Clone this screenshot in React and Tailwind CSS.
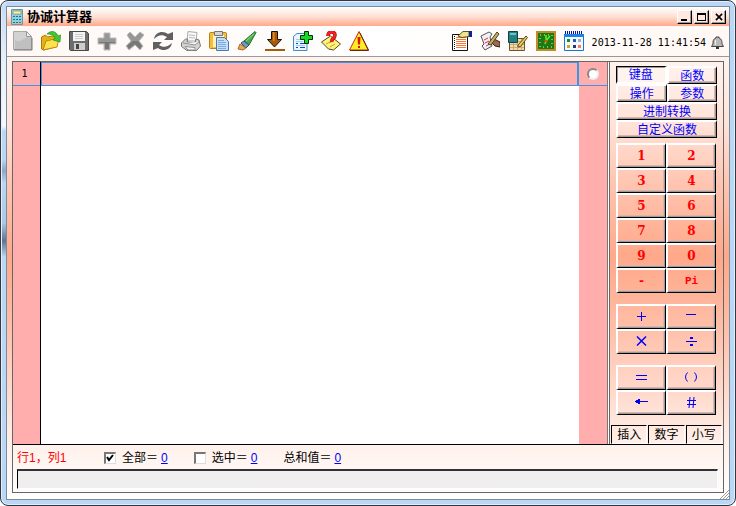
import { useState } from "react";

const raised =
  "border-t-2 border-l-2 border-r border-b border-t-white border-l-white border-r-black border-b-black shadow-[inset_-1px_-1px_0_#9a9a9a,inset_-2px_-2px_0_#d9b5ac]";
const pressed =
  "border-t border-l border-r-2 border-b-2 border-t-black border-l-black border-r-white border-b-white bg-[#fff3ee] shadow-[inset_1px_1px_0_#999]";

const leftTools = [
  {
    name: "新建",
    icon: (
      <>
        <path d="M.5.5h13l5 5v13H.5z" fill="#d2d2d2" stroke="#a8a8a8" />
        <path d="M2 9c4 3 9-1 12-3h4v12H2z" fill="#c0c0c0" />
        <path d="M13.5.5v5h5z" fill="#f0f0f0" stroke="#999" />
        <path d="M1 19h18V7" fill="none" stroke="#777" />
      </>
    ),
  },
  {
    name: "打开",
    icon: (
      <>
        <path d="M.5 6v12l2 1 12-3V6l-3-1-5 1-2-2z" fill="#e5b11b" stroke="#a97b08" />
        <path d="m2 19 3-9 13-3-2 9z" fill="#ffe04d" stroke="#b88a10" />
        <path d="M6 3c4-4 9-3 11 2l2.500-1-.5 7-7-2 2-2c-1-3-4-4-8-4z" fill="#3fc832" stroke="#258c20" strokeWidth=".7" />
      </>
    ),
  },
  {
    name: "保存",
    icon: (
      <>
        <path d="M.5.5h17l2 2v17h-18l-1-1z" fill="#6c6c6c" stroke="#484848" />
        <path d="M4 1h12v9H4z" fill="#f3f3f3" />
        <path d="M6 3.500h8M6 5.500h8M6 7.500h8" stroke="#ccc" />
        <path d="M5 12h11v7H5z" fill="#cecece" />
        <path d="M7 13h3v5H7z" fill="#444" />
      </>
    ),
  },
  {
    name: "添加",
    icon: (
      <>
        <path d="M7 2h6v5h6v6h-6v6H7v-6H1V7h6z" fill="#969696" stroke="#bbb" strokeLinejoin="round" />
        <path d="M8 11H2v1h6v6h4v-6h6v-1z" fill="#777" />
      </>
    ),
  },
  {
    name: "删除",
    icon: (
      <>
        <path d="m2 4 3-3 5 5 5-5 4 3-5 6 4 5-3 4-5-5-6 5-3-4 5-5z" fill="#969696" stroke="#bbb" strokeLinejoin="round" />
        <path d="m2 15 6-5h5l4 5-2 3-5-5-6 5z" fill="#777" />
      </>
    ),
  },
  {
    name: "刷新",
    icon: (
      <>
        <path d="M1 8C2 1 10-1 15 3l5-2v8h-9l3-3C9 3 5 4 1 8z" fill="#606060" />
        <path d="M19 12c-1 7-9 9-14 5l-5 2v-8h9l-3 3c4 3 9 2 13-2z" fill="#606060" />
      </>
    ),
  },
  {
    name: "打印",
    icon: (
      <>
        <path d="m6 10 1-9.500 9 1L15 10z" fill="#f8f8f8" stroke="#aaa" />
        <path d="m8 4 6 .5M8 6.500l6 .5" stroke="#bbb" />
        <path d="m.5 12 4-4h2L6 11l8 1 1-4 3 1 1.500 6-4 4.500H6l-5.500-4z" fill="#d3d3d3" stroke="#777" />
        <path d="m2 12 12 2 4-3M4 15.500l10 1V19H7z" fill="#f7f7f7" stroke="#909090" />
      </>
    ),
  },
  {
    name: "粘贴",
    icon: (
      <>
        <rect x=".5" y="1.500" width="17" height="16" rx="1" fill="#f3bd3d" stroke="#b78118" />
        <path d="M4 4h11v12H4z" fill="#fff1b8" />
        <path d="M5.500.5h8v4h-8z" fill="#d5d5d5" stroke="#777" />
        <path d="M7.500 6.500h8l4 4v9h-12z" fill="#c4ddf8" stroke="#4b79ae" />
        <path d="M9 9.500h6M9 11.500h8M9 13.500h8M9 15.500h8M9 17.500h8" stroke="#7dabe0" />
      </>
    ),
  },
  {
    name: "清除",
    icon: (
      <>
        <path d="M7 10 18 .5l1 1L12 14z" fill="#4fa94b" stroke="#276e2c" />
        <path d="m9 10 8-7" stroke="#9adb8e" />
        <path d="m4 12 3-2 5 4-3 3z" fill="#6e9cb8" stroke="#2a5570" />
        <path d="m1 18 2-5 6 4-3 2z" fill="#e4a75d" stroke="#a86a2a" />
      </>
    ),
  },
  {
    name: "下移",
    icon: (
      <>
        <path d="M6.500.5h6v8h4l-7 7.500-7-7.500h4z" fill="#a85a08" stroke="#191000" />
        <path d="M8 1h1.500v9H8z" fill="#d68b2c" />
        <path d="M0 19h20" stroke="#a85a08" strokeWidth="2" />
      </>
    ),
  },
  {
    name: "插入页",
    icon: (
      <>
        <path d="M.5 5.500 4 2.500h10v17H.5z" fill="#e9f5ff" stroke="#438bc6" />
        <path d="M3 12.500h2m2 0h5m-9 4h2m2 0h5" stroke="#1747c0" />
        <path d="M3 8.500h6M3 10.500h7M3 14.500h9" stroke="#a4cdea" />
        <path d="M11.500.5h4v4h4v4h-4v4h-4v-4h-4v-4h4z" fill="#16d926" stroke="#062e09" />
      </>
    ),
  },
  {
    name: "便签",
    icon: (
      <>
        <path d="m.5 11 9-6 10 8-7 6-5-1z" fill="#fff27c" stroke="#4f4920" />
        <path d="m5 13 4-2m0 5 5-3" stroke="#c69f25" />
        <path d="M7 5c0-5 7-5 7-1s-4 3-3 7" fill="none" stroke="#a00" strokeWidth="3.500" />
        <path d="M7 5c0-5 7-5 7-1s-4 3-3 7" fill="none" stroke="#f52020" strokeWidth="2.500" />
      </>
    ),
  },
  {
    name: "警告",
    icon: (
      <>
        <path d="M10 .5 19.500 19h-19z" fill="#ffee20" stroke="#d02810" />
        <path d="M1 19.500h18.500L11 2" fill="none" stroke="#5d2a16" />
        <path d="M8.500 6h3L11 13.500H9z" fill="#db1313" />
        <rect x="9" y="15" width="2" height="2" fill="#db1313" />
      </>
    ),
  },
];

const rightTools = [
  {
    name: "记录",
    icon: (
      <>
        <path d="M.5 3.500h15v16H.5z" fill="#fff" stroke="#111" />
        <path d="M4 6.500h10M4 8.500h10M4 10.500h10M4 12.500h10M4 14.500h10M4 16.500h10" stroke="#ff7433" />
        <path d="M2.500 5v14" stroke="#111" strokeDasharray="1 1" />
        <path d="m6 5 5-4.500h6v5l-7 1z" fill="#f0e389" stroke="#5c571f" />
        <path d="M17 0h3v6h-3z" fill="#1020a0" />
      </>
    ),
  },
  {
    name: "手写",
    icon: (
      <>
        <path d="m1 5 8-4 3 2-2 3 2 9-7 4-3-4 2-2z" fill="#f2f0f7" stroke="#555" />
        <path d="m4 9 4-2m-3 5 4-2m-3 5 4-2" stroke="#e0303f" />
        <path d="m11 11 3-3 6 3v5l-5-1z" fill="#a06a4a" stroke="#302018" />
        <path d="m8 13 9-12 2 2-8 11z" fill="#c5ae5b" stroke="#4a4128" />
      </>
    ),
  },
  {
    name: "笔记",
    icon: (
      <>
        <path d="M1.500 7.500h15v12h-15z" fill="#f4dcaa" stroke="#695331" />
        <path d="M2 10.500h14M2 13.500h14M2 16.500h14M5.500 8v11m4-11v11m4-11v11" stroke="#c9ab72" />
        <path d="M.5.5h9v11h-9z" fill="#238185" stroke="#0b4346" />
        <path d="M2 2h6v2H2z" fill="#71c3c0" />
        <path d="m10 14 8-9 1.500 1.500-7 9L10 16z" fill="#e8d050" stroke="#5d4816" />
      </>
    ),
  },
  {
    name: "时钟",
    icon: (
      <>
        <path d="M1 1h18v18H1z" fill="#1d7a12" stroke="#c68b28" strokeWidth="2" />
        <rect x="4" y="4" width="12" height="12" fill="none" stroke="#d5ffba" strokeDasharray="1 3" />
        <path d="m9 13 1-3V4m0 6 4-5" fill="none" stroke="#4bff24" strokeWidth="1.500" />
        <circle cx="10" cy="10" r="1.500" fill="#f7471d" />
      </>
    ),
  },
  {
    name: "日历",
    icon: (
      <>
        <path d="M.5 3.500h19v16H.5z" fill="#f2f9ff" stroke="#1774d1" />
        <path d="M0 3h20v3H0z" fill="#1b83e4" />
        <path d="M1 1.500h18" stroke="#0713a2" strokeWidth="3" strokeDasharray="1 1" />
        <path d="M3 8h3v3H3z" fill="#198d25" />
        <path d="M9 8h3v3H9z" fill="#2e58be" />
        <path d="M14 8h3v3h-3z" fill="#aaa5d9" />
        <path d="M3 14h3v3H3z" fill="#d3a629" />
        <path d="M9 14h3v3H9z" fill="#203982" />
        <path d="M14 14h3v3h-3z" fill="#ff7958" />
      </>
    ),
  },
];

const tabs = [
  { label: "键盘", span: "col-span-1" },
  { label: "函数", span: "col-span-1" },
  { label: "操作", span: "col-span-1" },
  { label: "参数", span: "col-span-1" },
  { label: "进制转换", span: "col-span-2" },
  { label: "自定义函数", span: "col-span-2" },
];

const digits = ["1", "2", "3", "4", "5", "6", "7", "8", "9", "0", "-", "Pi"];

const operators = [
  { name: "+", icon: <path d="M7 2h1v9H7zM3 6h9v1H3z" /> },
  { name: "−", icon: <path d="M2 4h10v1H2z" /> },
  { name: "×", icon: <path d="M3 1.500 12 10.500M3 10.500 12 1.500" stroke="#00f" strokeWidth="1.500" /> },
  { name: "÷", icon: <path d="M2 6h11v1H2zM6 2h3v2H6zM6 9h3v2H6z" /> },
];

const extras = [
  { name: "=", icon: <path d="M2 4h11v1H2zM2 8h11v1H2z" /> },
  {
    name: "()",
    icon: (
      <path d="M3.500 1.500Q-.5 6 3.500 10.500M10.500 1.500q4 4.500 0 9" fill="none" stroke="#00f" />
    ),
  },
  { name: "←", icon: <path d="M1 5h13v1H1zM2 4h4v3H2zM4 3h2v5H4z" /> },
  {
    name: "#",
    icon: <path d="m6 1-1 11M10 1 9 12M3 4.500h9M3 8.500h9" fill="none" stroke="#00f" />,
  },
];

function ToolButton({ tool }) {
  return (
    <button type="button" aria-label={tool.name} className="h-5 w-5 shrink-0">
      <svg viewBox="0 0 20 20" className="h-5 w-5">
        {tool.icon}
      </svg>
    </button>
  );
}

function SymbolPad({ keys }) {
  return (
    <div className="mr-px grid grid-cols-2">
      {keys.map((key) => (
        <button
          key={key.name}
          type="button"
          aria-label={key.name}
          className={`flex h-[25px] items-center justify-center ${raised}`}
        >
          <svg viewBox="0 0 15 14" className="h-3.5 w-[15px]" fill="#00f">
            {key.icon}
          </svg>
        </button>
      ))}
    </div>
  );
}

function CheckBox({ id, checked, onChange }) {
  return (
    <span className="grid h-3 w-3 place-items-center">
      <input
        id={id}
        type="checkbox"
        checked={checked}
        onChange={onChange}
        className="peer col-start-1 row-start-1 h-3 w-3 appearance-none border-t-2 border-l-2 border-r border-b border-t-[#777] border-l-[#777] border-r-[#ddd] border-b-[#ddd] bg-white"
      />
      <svg
        viewBox="0 0 8 8"
        className="pointer-events-none invisible col-start-1 row-start-1 h-2 w-2 peer-checked:visible"
      >
        <path d="m1 3 2 3 4-5" fill="none" stroke="#000" strokeWidth="2" />
      </svg>
    </span>
  );
}

function TitleBar() {
  const caption =
    "flex h-[14px] w-[15px] items-center justify-center border-t border-l border-r border-b border-t-white border-l-white border-r-black border-b-black bg-[#ffe9e1] shadow-[inset_-1px_-1px_0_#999]";
  return (
    <header className="flex h-[19px] items-center bg-linear-to-b from-white via-[#ffe0d5] to-[#ffa98b] pr-[3px] pl-1">
      <svg viewBox="0 0 12 16" className="h-4 w-3">
        <path d="M.5.5h11v15H.5z" fill="#8fd0dc" stroke="#6a98a2" />
        <path d="M2 2h8v3H2z" fill="#fff1a0" stroke="#777" strokeWidth=".6" />
        <path d="M2 7h2v1H2zm3 0h2v1H5zm3 0h2v1H8zM2 10h2v1H2zm3 0h2v1H5zm3 0h2v1H8zM2 13h2v1H2zm3 0h2v1H5z" fill="#147a96" />
        <path d="M8 13h2v1H8z" fill="#e93820" />
      </svg>
      <h1 className="ml-1 text-[13px] leading-4 font-bold">协诚计算器</h1>
      <div className="ml-auto flex gap-0.5">
        <button type="button" aria-label="最小化" className={caption}>
          <svg viewBox="0 0 8 8" className="h-2 w-2">
            <path d="M0 6h6v2H0z" />
          </svg>
        </button>
        <button type="button" aria-label="最大化" className={caption}>
          <svg viewBox="0 0 9 8" className="h-2 w-[9px]">
            <path d="M0 0h9v8H0zm1 2v5h7V2z" fillRule="evenodd" />
          </svg>
        </button>
        <button type="button" aria-label="关闭" className={caption}>
          <svg viewBox="0 0 9 9" className="h-2 w-2">
            <path d="m1 1 7 7M1 8l7-7" stroke="#000" strokeWidth="1.800" />
          </svg>
        </button>
      </div>
    </header>
  );
}

function ToolBar() {
  return (
    <div className="flex h-[31px] items-center border-b border-[#999] bg-linear-to-r from-[#fff8f4] via-white to-[#fff8f4] pr-[5px] pl-1.5">
      <div className="flex gap-2">
        {leftTools.map((tool) => (
          <ToolButton key={tool.name} tool={tool} />
        ))}
      </div>
      <div className="ml-auto flex gap-2">
        {rightTools.map((tool) => (
          <ToolButton key={tool.name} tool={tool} />
        ))}
      </div>
      <time className="ml-2 pt-1 font-['DejaVu_Sans_Mono',monospace] text-[10px] whitespace-nowrap">
        2013-11-28 11:41:54
      </time>
      <button type="button" aria-label="提醒" className="ml-[5px] pt-0.5">
        <svg viewBox="0 0 13 13" className="h-[13px] w-[13px]">
          <path d="M5 1h3v1c3 1 3 4 3 6l1.500 2.500H.5L2 8c0-3 0-5 3-6z" fill="#b8b8b8" stroke="#444" />
          <path d="M4.500 4v5" stroke="#eee" />
          <path d="M5 11h3v2H5z" fill="#333" />
        </svg>
      </button>
    </div>
  );
}

function Sidebar() {
  const [tab, setTab] = useState("键盘");
  return (
    <aside className="flex w-[116px] shrink-0 border-l border-[#777]">
      <div className="w-px bg-white" />
      <div className="flex flex-1 flex-col border-l border-[#666] pt-1">
        <div className="mx-1.5 grid grid-cols-2">
          {tabs.map((t) => (
            <button
              key={t.label}
              type="button"
              onClick={() => setTab(t.label)}
              className={`flex h-[18px] items-center justify-center text-xs leading-3 text-[#00f] ${t.span} ${tab === t.label ? pressed : raised}`}
            >
              {t.label}
            </button>
          ))}
        </div>
        <div className="mx-1.5 mt-[5px] flex flex-col gap-[11px]">
          <div className="mr-px grid grid-cols-2">
            {digits.map((d) => (
              <button
                key={d}
                type="button"
                className={`h-[25px] leading-5 font-bold text-[#f00] ${d === "Pi" ? "font-['Liberation_Mono',monospace] text-[11px]" : "font-['DejaVu_Serif',serif] text-xs"} ${raised}`}
              >
                {d}
              </button>
            ))}
          </div>
          <SymbolPad keys={operators} />
          <SymbolPad keys={extras} />
        </div>
        <div className="mt-auto flex gap-px px-px">
          {["插入", "数字", "小写"].map((mode) => (
            <span
              key={mode}
              className="flex h-[19px] flex-1 items-center justify-center border-t border-l border-r border-b border-t-black border-l-black border-r-white border-b-white text-xs leading-4"
            >
              {mode}
            </span>
          ))}
        </div>
      </div>
    </aside>
  );
}

export default function App() {
  const [all, setAll] = useState(true);
  const [selected, setSelected] = useState(false);

  return (
    <div className="flex min-h-screen flex-col bg-white font-['Liberation_Sans','Noto_Sans_CJK_SC',sans-serif] text-xs text-black">
      <div className="flex flex-1 flex-col rounded-lg border border-[#35373d] bg-[#b9d8f8] bg-[linear-gradient(to_bottom,#c3daf5_0,#e6f0fb_60px,#f4f8fd_125px,#b9d8f8_130px,#b9d8f8_158px,#8fa6c4_170px,#b9d8f8_182px,#a9c8ea_222px,#5f7391_240px,#b9d8f8_256px)] bg-[length:6px_100%] bg-no-repeat p-[5px] shadow-[inset_0_0_0_1px_#e3eefb]">
        <div className="relative flex flex-1 flex-col border border-[#7b8b99]">
          <TitleBar />
          <ToolBar />
          <div className="flex flex-1 flex-col bg-[linear-gradient(to_bottom,#fff3ee_0%,#ffe3d9_15%,#ffc6b2_28%,#ffa88a_45%,#ffb69c_56%,#ffdccf_77%,#fff1eb_88%,#fff_100%)] px-[5px] pt-1 pb-1.5">
            <main className="flex flex-1 flex-col border border-[#666]">
              <div className="flex flex-1 border-b border-black">
                <div className="w-7 shrink-0 border-r border-black bg-[#ffadad]">
                  <div className="h-6 border-b border-[#3d95e8] pr-1 text-center font-['DejaVu_Sans_Mono',monospace] text-[10px] leading-6">
                    1
                  </div>
                </div>
                <div className="flex min-w-0 flex-1 flex-col bg-white">
                  <input
                    aria-label="算式 1"
                    className="h-6 w-full border border-r-2 border-[#3d95e8] bg-[#ffadad] px-1 outline-none"
                  />
                </div>
                <div className="w-7 shrink-0 bg-[#ffadad]">
                  <div className="flex h-6 items-center justify-center border-b border-[#3d95e8]">
                    <input
                      type="radio"
                      aria-label="选中第 1 行"
                      className="h-3 w-3 appearance-none rounded-full border-2 border-t-[#888] border-r-[#eee] border-b-[#eee] border-l-[#888] bg-white"
                    />
                  </div>
                </div>
                <Sidebar />
              </div>

              <div className="flex h-6 items-center pt-0.5 pl-1">
                <span className="w-[87px] text-[#f00]">行1，列1</span>
                <CheckBox id="all" checked={all} onChange={() => setAll(!all)} />
                <label htmlFor="all" className="ml-1.5">
                  全部＝
                </label>
                <a href="#all" className="ml-[3px] text-[#00f] underline">
                  0
                </a>
                <span className="w-[26px]" />
                <CheckBox id="selected" checked={selected} onChange={() => setSelected(!selected)} />
                <label htmlFor="selected" className="ml-1.5">
                  选中＝
                </label>
                <a href="#selected" className="ml-[3px] text-[#00f] underline">
                  0
                </a>
                <span className="ml-[26px]">总和值＝</span>
                <a href="#total" className="ml-[3px] text-[#00f] underline">
                  0
                </a>
              </div>
              <input
                aria-label="结果"
                readOnly
                className="mr-[5px] mb-[3px] ml-1 h-5 border-t-2 border-l border-r border-b border-t-[#333] border-l-black border-r-white border-b-white bg-[#efefef] px-1 outline-none"
              />
            </main>
          </div>
          <svg viewBox="0 0 9 9" className="absolute right-0 bottom-0 h-[9px] w-[9px]">
            <path d="m0 9 9-9M3 9l6-6M6 9l3-3" stroke="#999" />
          </svg>
        </div>
      </div>
    </div>
  );
}
